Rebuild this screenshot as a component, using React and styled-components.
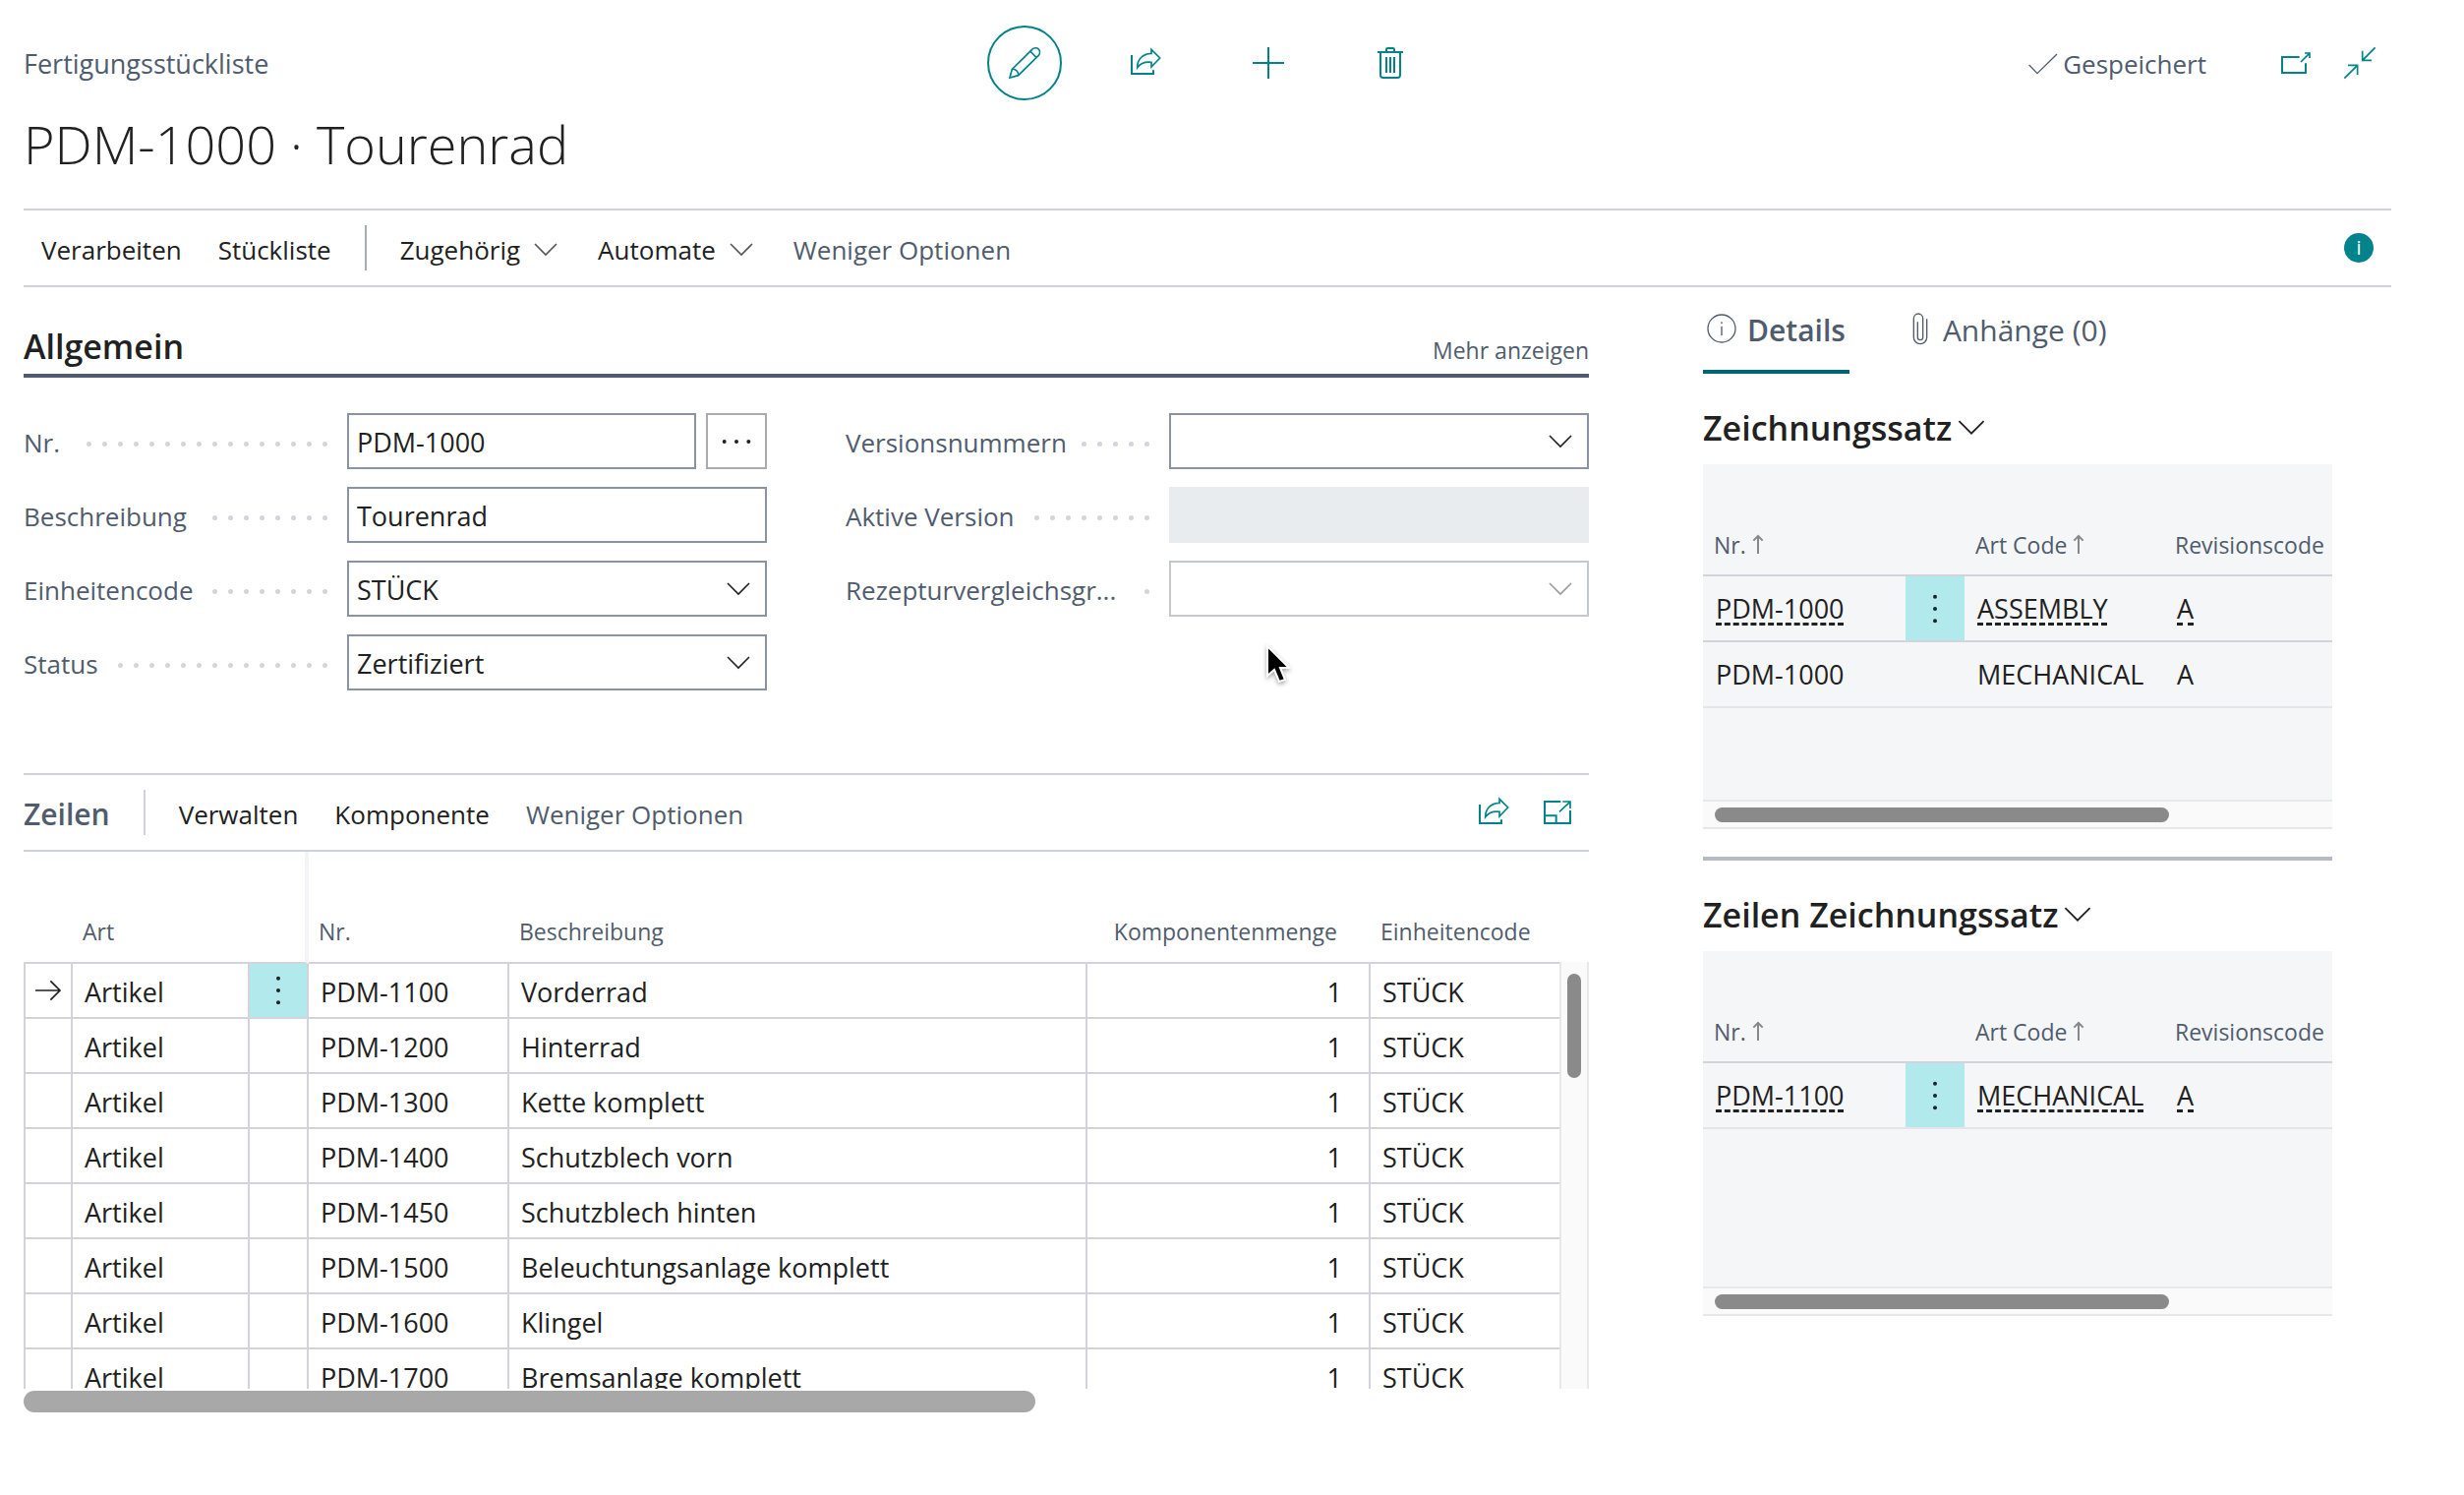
import React from "react";
import styled, { createGlobalStyle, css } from "styled-components";

const colors = {
  text: "#212121",
  slate: "#505c6d",
  teal: "#00838a",
  tealDark: "#00666e",
  cyan: "#b2e9ed",
  line: "#cfd3d9",
  grid: "#d3d3db",
  fieldBorder: "#8a93a1",
  readOnly: "#e8ecef",
  panel: "#f5f6f8",
};

const lines = [
  ["PDM-1100", "Vorderrad"],
  ["PDM-1200", "Hinterrad"],
  ["PDM-1300", "Kette komplett"],
  ["PDM-1400", "Schutzblech vorn"],
  ["PDM-1450", "Schutzblech hinten"],
  ["PDM-1500", "Beleuchtungsanlage komplett"],
  ["PDM-1600", "Klingel"],
  ["PDM-1700", "Bremsanlage komplett"],
];

const drawingSets = [
  {
    title: "Zeichnungssatz",
    rows: [
      ["PDM-1000", "ASSEMBLY", "A"],
      ["PDM-1000", "MECHANICAL", "A"],
    ],
  },
  {
    title: "Zeilen Zeichnungssatz",
    rows: [["PDM-1100", "MECHANICAL", "A"]],
  },
];

/* Icons */

const Icon = ({ w = 32, h = 32, box, sw = 6, children }) => (
  <svg
    width={w}
    height={h}
    viewBox={box || `0 0 ${w * 3} ${h * 3}`}
    fill="none"
    stroke="currentColor"
    strokeWidth={sw}
    aria-hidden="true"
  >
    {children}
  </svg>
);

const PencilIcon = () => (
  <Icon sw={5}>
    <path d="M3 93 10 67 71 7C76 1 86 1 91 6 96 12 95 21 90 26L29 86Z" />
    <path d="M65 12 84 31M10 67C21 65 31 76 29 86" />
  </Icon>
);

const ShareIcon = () => (
  <Icon>
    <path d="M3 24V81H69V70" />
    <path
      strokeWidth="5"
      d="M63 7 89 33 63 60V46C45 44 29 50 20 62 20 39 34 20 63 19Z"
    />
  </Icon>
);

const PlusIcon = () => (
  <Icon>
    <path d="M48 0V96M0 48H96" />
  </Icon>
);

const TrashIcon = () => (
  <Icon w={26}>
    <path d="M0 15H78M27 15V7Q27 3 31 3H47Q51 3 51 7V15" />
    <path d="M9 15V85Q9 93 17 93H61Q69 93 69 85V15M27 30V78M39 30V78M51 30V78" />
  </Icon>
);

const CheckIcon = () => (
  <Icon w={30} h={22} sw={4}>
    <path d="M2 36 27 62 87 3" />
  </Icon>
);

const PopOutIcon = () => (
  <Icon w={30} h={22}>
    <path d="M56 15H3V63H75V34" />
    <path strokeWidth="5" d="M60 30 86 4M72 3H87V18" />
  </Icon>
);

const CollapseIcon = () => (
  <Icon sw={5}>
    <path d="M1 95 41 55M12 55H41V84M95 1 56 40M56 11V40H84" />
  </Icon>
);

const ExpandIcon = () => (
  <Icon w={28} h={24}>
    <path d="M52 3H3V69H81V30M3 46H38V69" />
    <path strokeWidth="5" d="M48 34 80 4M58 3H81V24" />
  </Icon>
);

const ChevronIcon = ({ w = 24 }) => (
  <Icon w={w} h={w > 24 ? 16 : 14} box="0 0 24 14" sw={1.6}>
    <path d="M1 1 12 12 23 1" />
  </Icon>
);

const InfoIcon = () => (
  <Icon w={30} h={30} sw={4}>
    <circle cx="45" cy="45" r="42" />
    <path d="M45 38V66M45 25V31" />
  </Icon>
);

const ClipIcon = () => (
  <Icon w={20} h={32} sw={4}>
    <path d="M44 19V75A20 20 0 0 1 4 75V17A14 14 0 0 1 32 17V75A8 8 0 0 1 16 75V28" />
  </Icon>
);

const ArrowRightIcon = () => (
  <Icon w={26} h={22} sw={5}>
    <path d="M0 33H74M46 4 75 33 46 62" />
  </Icon>
);

const SortIcon = () => (
  <Icon w={12} h={20}>
    <path d="M18 60V6M4 20 18 6 32 20" />
  </Icon>
);

const MoreIcon = ({ vertical }) => (
  <Icon w={vertical ? 6 : 30} h={vertical ? 30 : 6}>
    {[8, 45, 82].map((p) => (
      <circle
        key={p}
        cx={vertical ? 9 : p}
        cy={vertical ? p : 9}
        r="6"
        fill="currentColor"
        stroke="none"
      />
    ))}
  </Icon>
);

/* Page */

const App = () => (
  <Page>
    <GlobalStyle />
    <Header>
      <Caption>Fertigungsstückliste</Caption>
      <Actions>
        <RoundButton $active aria-label="Bearbeiten">
          <PencilIcon />
        </RoundButton>
        <RoundButton aria-label="Teilen">
          <ShareIcon />
        </RoundButton>
        <RoundButton aria-label="Neu">
          <PlusIcon />
        </RoundButton>
        <RoundButton aria-label="Löschen">
          <TrashIcon />
        </RoundButton>
      </Actions>
      <Status>
        <Saved>
          <CheckIcon />
          Gespeichert
        </Saved>
        <IconButton aria-label="In neuem Fenster öffnen">
          <PopOutIcon />
        </IconButton>
        <IconButton aria-label="Verkleinern">
          <CollapseIcon />
        </IconButton>
      </Status>
    </Header>
    <Title>PDM-1000 · Tourenrad</Title>
    <MenuBar>
      <MenuButton>Verarbeiten</MenuButton>
      <MenuButton>Stückliste</MenuButton>
      <Divider $dark />
      <MenuButton>
        Zugehörig <ChevronIcon />
      </MenuButton>
      <MenuButton>
        Automate <ChevronIcon />
      </MenuButton>
      <MenuButton $muted>Weniger Optionen</MenuButton>
      <Spacer />
      <InfoBadge aria-label="Info">i</InfoBadge>
    </MenuBar>
    <Content>
      <Main>
        <General />
        <Lines />
      </Main>
      <FactBoxes />
    </Content>
  </Page>
);

const Field = ({ id, label, children }) => (
  <FieldRow>
    <FieldLabel htmlFor={id}>
      {label}
      <Leader aria-hidden="true">
        {Array.from({ length: 17 }, (_, i) => (
          <i key={i} />
        ))}
      </Leader>
    </FieldLabel>
    <FieldControl>{children}</FieldControl>
  </FieldRow>
);

const Dropdown = ({ id, value, disabled }) => (
  <SelectWrap $disabled={disabled}>
    <Select id={id} defaultValue={value} disabled={disabled}>
      <option value={value}>{value}</option>
    </Select>
    <ChevronIcon />
  </SelectWrap>
);

const General = () => (
  <section>
    <SectionHeader>
      <SectionTitle>Allgemein</SectionTitle>
      <TextLink href="#">Mehr anzeigen</TextLink>
    </SectionHeader>
    <Form>
      <FieldColumn>
        <Field id="nr" label="Nr.">
          <Input id="nr" defaultValue="PDM-1000" />
          <AssistButton aria-label="Auswählen">
            <MoreIcon />
          </AssistButton>
        </Field>
        <Field id="description" label="Beschreibung">
          <Input id="description" defaultValue="Tourenrad" />
        </Field>
        <Field id="unit" label="Einheitencode">
          <Dropdown id="unit" value="STÜCK" />
        </Field>
        <Field id="status" label="Status">
          <Dropdown id="status" value="Zertifiziert" />
        </Field>
      </FieldColumn>
      <FieldColumn>
        <Field id="versions" label="Versionsnummern">
          <Dropdown id="versions" value="" />
        </Field>
        <Field id="active" label="Aktive Version">
          <Input id="active" readOnly $readOnly />
        </Field>
        <Field id="recipe" label="Rezepturvergleichsgr...">
          <Dropdown id="recipe" value="" disabled />
        </Field>
      </FieldColumn>
      <Pointer width="28" height="44" viewBox="0 0 28 44" aria-hidden="true">
        <path
          d="M3 3V33L10 27 15 39 21 37 16 25H25Z"
          fill="#000"
          stroke="#fff"
          strokeWidth="2"
        />
      </Pointer>
    </Form>
  </section>
);

const Lines = () => (
  <section>
    <MenuBar $flush>
      <LinesTitle>Zeilen</LinesTitle>
      <Divider />
      <MenuButton>Verwalten</MenuButton>
      <MenuButton>Komponente</MenuButton>
      <MenuButton $muted>Weniger Optionen</MenuButton>
      <Spacer />
      <LineTools>
        <IconButton aria-label="Teilen">
          <ShareIcon />
        </IconButton>
        <IconButton aria-label="Erweitern">
          <ExpandIcon />
        </IconButton>
      </LineTools>
    </MenuBar>
    <GridArea>
      <LineTable>
        <colgroup>
          <col width="50" />
          <col width="180" />
          <col width="60" />
          <col width="204" />
          <col />
          <col width="288" />
          <col width="192" />
        </colgroup>
        <thead>
          <tr>
            <th />
            <th>Art</th>
            <FrozenHead />
            <th>Nr.</th>
            <th>Beschreibung</th>
            <NumberHead>Komponentenmenge</NumberHead>
            <th>Einheitencode</th>
          </tr>
        </thead>
        <tbody>
          {lines.map(([no, description], i) => (
            <tr key={no}>
              <IconCell>{i === 0 && <ArrowRightIcon />}</IconCell>
              <td>Artikel</td>
              <IconCell $active={i === 0}>
                {i === 0 && <MoreIcon vertical />}
              </IconCell>
              <td>{no}</td>
              <td>{description}</td>
              <NumberCell>1</NumberCell>
              <td>STÜCK</td>
            </tr>
          ))}
        </tbody>
      </LineTable>
      <VerticalTrack>
        <VerticalThumb />
      </VerticalTrack>
    </GridArea>
    <PageThumb />
  </section>
);

const FactBoxes = () => (
  <Sidebar>
    <Tabs>
      <Tab $active>
        <InfoIcon />
        <TabLabel>Details</TabLabel>
      </Tab>
      <Tab>
        <ClipIcon />
        <TabLabel>Anhänge (0)</TabLabel>
      </Tab>
    </Tabs>
    {drawingSets.map(({ title, rows }) => (
      <FactBox key={title}>
        <FactTitle>
          <FactButton>
            {title}
            <ChevronIcon w={28} />
          </FactButton>
        </FactTitle>
        <Panel>
          <FactTable>
            <colgroup>
              <col width="206" />
              <col width="60" />
              <col width="203" />
              <col />
            </colgroup>
            <thead>
              <tr>
                <th>
                  Nr. <SortIcon />
                </th>
                <th />
                <th>
                  Art Code <SortIcon />
                </th>
                <th>Revisionscode</th>
              </tr>
            </thead>
            <tbody>
              {rows.map(([no, type, rev], i) => (
                <FactRow key={type} $last={i === rows.length - 1}>
                  <td>{i === 0 ? <CellLink href="#">{no}</CellLink> : no}</td>
                  <IconCell $active={i === 0}>
                    {i === 0 && <MoreIcon vertical />}
                  </IconCell>
                  <td>
                    {i === 0 ? <CellLink href="#">{type}</CellLink> : type}
                  </td>
                  <td>{i === 0 ? <CellLink href="#">{rev}</CellLink> : rev}</td>
                </FactRow>
              ))}
            </tbody>
          </FactTable>
          <PanelTrack>
            <PanelThumb />
          </PanelTrack>
        </Panel>
      </FactBox>
    ))}
  </Sidebar>
);

const GlobalStyle = createGlobalStyle`
  * {
    box-sizing: border-box;
  }

  body {
    margin: 0;
    background: #fff;
    color: ${colors.text};
    font-family: "Segoe UI", "Open Sans", "Noto Sans", sans-serif;
    font-size: 27px;
    line-height: 36px;
  }

  button,
  input,
  select {
    margin: 0;
    padding: 0;
    border: 0;
    background: none;
    color: inherit;
    font: inherit;
  }

  h1,
  h2,
  h3 {
    margin: 0;
  }

  svg {
    display: block;
    flex: none;
    overflow: visible;
  }
`;

const Page = styled.div`
  padding: 26px 74px 0 24px;
`;

const Header = styled.header`
  display: grid;
  grid-template-columns: 1fr auto 1fr;
  align-items: center;
`;

const Caption = styled.div`
  padding-top: 2px;
  color: ${colors.slate};
`;

const Actions = styled.div`
  display: flex;
  gap: 48px;
`;

const RoundButton = styled.button`
  display: flex;
  align-items: center;
  justify-content: center;
  width: 76px;
  height: 76px;
  border: 2px solid ${(p) => (p.$active ? colors.teal : "transparent")};
  border-radius: 50%;
  color: ${colors.teal};
`;

const Status = styled.div`
  display: flex;
  align-items: center;
  justify-content: flex-end;
  gap: 34px;
  padding-right: 16px;
`;

const Saved = styled.div`
  display: flex;
  align-items: center;
  gap: 5px;
  margin-right: 42px;
  padding-top: 2px;
  color: ${colors.slate};
  font-size: 26px;
`;

const IconButton = styled.button`
  display: flex;
  color: ${colors.teal};
`;

const Title = styled.h1`
  padding: 4px 0 26px;
  font-size: 54px;
  font-weight: 300;
  line-height: 80px;
`;

const MenuBar = styled.div`
  display: flex;
  align-items: center;
  gap: 37px;
  height: 80px;
  padding: 0 18px;
  border-top: 2px solid ${colors.line};
  border-bottom: 2px solid ${colors.line};
  ${(p) =>
    p.$flush &&
    css`
      padding-left: 0;
    `}
`;

const MenuButton = styled.button`
  display: flex;
  align-items: center;
  gap: 14px;
  padding-top: 4px;
  color: ${(p) => (p.$muted ? colors.slate : colors.text)};
  font-size: 26px;

  svg {
    margin-right: 4px;
    color: #555;
  }
`;

const Divider = styled.span`
  width: 2px;
  height: 46px;
  margin: 0 -3px;
  background: ${(p) => (p.$dark ? "#a3adb8" : colors.line)};
`;

const Spacer = styled.span`
  flex: 1;
`;

const InfoBadge = styled.button`
  width: 30px;
  height: 30px;
  border-radius: 50%;
  background: ${colors.teal};
  color: #fff;
  font-size: 20px;
  line-height: 30px;
`;

const Content = styled.div`
  display: flex;
  gap: 116px;
  padding-right: 60px;
`;

const Main = styled.main`
  flex: 1;
  min-width: 0;
`;

const SectionHeader = styled.div`
  display: flex;
  align-items: flex-end;
  justify-content: space-between;
  height: 92px;
  border-bottom: 4px solid ${colors.slate};
`;

const SectionTitle = styled.h2`
  font-size: 34px;
  font-weight: 600;
  line-height: 56px;
`;

const TextLink = styled.a`
  padding-bottom: 6px;
  color: ${colors.slate};
  font-size: 23px;
  text-decoration: none;
`;

const Form = styled.div`
  position: relative;
  display: grid;
  grid-template-columns: repeat(2, minmax(0, 1fr));
  gap: 80px;
  padding: 36px 0 84px;
`;

const Pointer = styled.svg`
  position: absolute;
  top: 270px;
  left: 1262px;
  filter: drop-shadow(0 2px 2px rgba(0, 0, 0, 0.35));
`;

const FieldColumn = styled.div`
  display: flex;
  flex-direction: column;
  gap: 18px;
`;

const FieldRow = styled.div`
  display: flex;
  align-items: center;
  height: 57px;
`;

const FieldLabel = styled.label`
  display: flex;
  align-items: center;
  width: 329px;
  padding-top: 3px;
  color: ${colors.slate};
  font-size: 26px;
  white-space: nowrap;
`;

/* Dots run from the right edge, the ones that do not fit wrap out of sight. */
const Leader = styled.span`
  display: flex;
  flex: 1;
  flex-flow: row-reverse wrap;
  gap: 11px;
  height: 5px;
  margin: 2px 20px 0 14px;
  overflow: hidden;

  i {
    width: 5px;
    height: 5px;
    border-radius: 50%;
    background: #d3d5dc;
  }
`;

const FieldControl = styled.div`
  display: flex;
  flex: 1;
  gap: 10px;
  min-width: 0;
  height: 100%;
`;

const Input = styled.input`
  flex: 1;
  min-width: 0;
  padding: 3px 8px 0;
  border: 2px solid ${colors.fieldBorder};
  outline: none;
  ${(p) =>
    p.$readOnly &&
    css`
      border-color: ${colors.readOnly};
      background: ${colors.readOnly};
    `}
`;

const SelectWrap = styled.div`
  display: grid;
  flex: 1;
  align-items: center;
  border: 2px solid ${(p) => (p.$disabled ? "#c3c8cf" : colors.fieldBorder)};

  > * {
    grid-area: 1 / 1;
  }

  svg {
    justify-self: end;
    margin-right: 15px;
    color: ${(p) => (p.$disabled ? "#999" : colors.text)};
    pointer-events: none;
  }
`;

const Select = styled.select`
  width: 100%;
  height: 100%;
  padding: 3px 8px 0;
  appearance: none;
  outline: none;
`;

const AssistButton = styled.button`
  display: flex;
  align-items: center;
  justify-content: center;
  width: 62px;
  border: 2px solid #ababab;
`;

const LinesTitle = styled.h2`
  padding-top: 3px;
  color: ${colors.slate};
  font-size: 30px;
  font-weight: 600;
`;

const LineTools = styled.div`
  display: flex;
  align-items: center;
  gap: 34px;
`;

const GridArea = styled.div`
  display: flex;
  height: 546px;
  overflow: hidden;
`;

const LineTable = styled.table`
  flex: 1;
  align-self: flex-start;
  border-spacing: 0;
  table-layout: fixed;

  th {
    height: 114px;
    padding: 0 10px 13px 10px;
    border-bottom: 2px solid ${colors.grid};
    color: ${colors.slate};
    font-size: 23px;
    font-weight: 400;
    text-align: left;
    vertical-align: bottom;
  }

  td {
    height: 56px;
    padding: 3px 0 0 12px;
    border-right: 2px solid ${colors.grid};
    border-bottom: 2px solid ${colors.grid};
    white-space: nowrap;
  }

  td:first-child {
    border-left: 2px solid ${colors.grid};
  }

  td:last-child {
    border-right: 0;
  }
`;

const FrozenHead = styled.th`
  && {
    border-right: 4px solid #f4f4f6;
  }
`;

const NumberHead = styled.th`
  && {
    padding-right: 34px;
    text-align: right;
  }
`;

const NumberCell = styled.td`
  && {
    padding-right: 27px;
    text-align: right;
  }
`;

const IconCell = styled.td`
  && {
    padding: 0;
    background: ${(p) => (p.$active ? colors.cyan : "transparent")};
  }

  svg {
    margin: 0 auto;
  }
`;

const VerticalTrack = styled.div`
  width: 30px;
  margin-top: 112px;
  padding: 12px 6px;
  border: solid #e8e8ea;
  border-width: 0 2px;
  background: #fafafa;
`;

const VerticalThumb = styled.div`
  width: 14px;
  height: 106px;
  border-radius: 7px;
  background: #8a8a8a;
`;

const PageThumb = styled.div`
  width: 1029px;
  max-width: 100%;
  height: 22px;
  margin-top: 2px;
  border-radius: 11px;
  background: #a8a8a8;
`;

const Sidebar = styled.aside`
  width: 640px;
`;

const Tabs = styled.div`
  display: flex;
  gap: 60px;
  height: 88px;
`;

const Tab = styled.button`
  display: flex;
  align-items: center;
  gap: 11px;
  padding: 0 4px;
  border-bottom: 4px solid
    ${(p) => (p.$active ? colors.tealDark : "transparent")};
  color: ${colors.slate};
  font-size: 30px;
  font-weight: ${(p) => (p.$active ? 600 : 400)};
`;

const TabLabel = styled.span`
  padding-top: 4px;
`;

const FactBox = styled.section`
  & + & {
    margin-top: 28px;
    border-top: 4px solid #b5bbc4;
  }
`;

const FactTitle = styled.h3`
  display: flex;
  align-items: center;
  height: 92px;
  padding-top: 18px;
`;

const FactButton = styled.button`
  display: flex;
  align-items: center;
  gap: 6px;
  font-size: 34px;
  font-weight: 600;
`;

const Panel = styled.div`
  display: flex;
  flex-direction: column;
  justify-content: space-between;
  height: 371px;
  background: ${colors.panel};
`;

const FactTable = styled.table`
  width: 100%;
  border-spacing: 0;
  table-layout: fixed;

  th {
    height: 114px;
    padding: 0 0 12px 11px;
    border-bottom: 2px solid ${colors.grid};
    color: ${colors.slate};
    font-size: 23px;
    font-weight: 400;
    text-align: left;
    vertical-align: bottom;
    white-space: nowrap;
  }

  th svg {
    display: inline-block;
    color: #888;
  }
`;

const FactRow = styled.tr`
  td {
    height: 67px;
    padding: 0 0 0 13px;
    border-bottom: 2px solid ${(p) => (p.$last ? "#e4e5e8" : colors.grid)};
  }
`;

const CellLink = styled.a`
  color: inherit;
  text-decoration: underline dashed 3px;
  text-underline-offset: 4px;
  text-decoration-skip-ink: none;
`;

const PanelTrack = styled.div`
  height: 30px;
  padding: 6px 12px;
  border: solid #e8e8ea;
  border-width: 2px 0;
  background: #fafafa;
`;

const PanelThumb = styled.div`
  width: 75%;
  height: 15px;
  border-radius: 8px;
  background: #8a8a8a;
`;

export default App;
